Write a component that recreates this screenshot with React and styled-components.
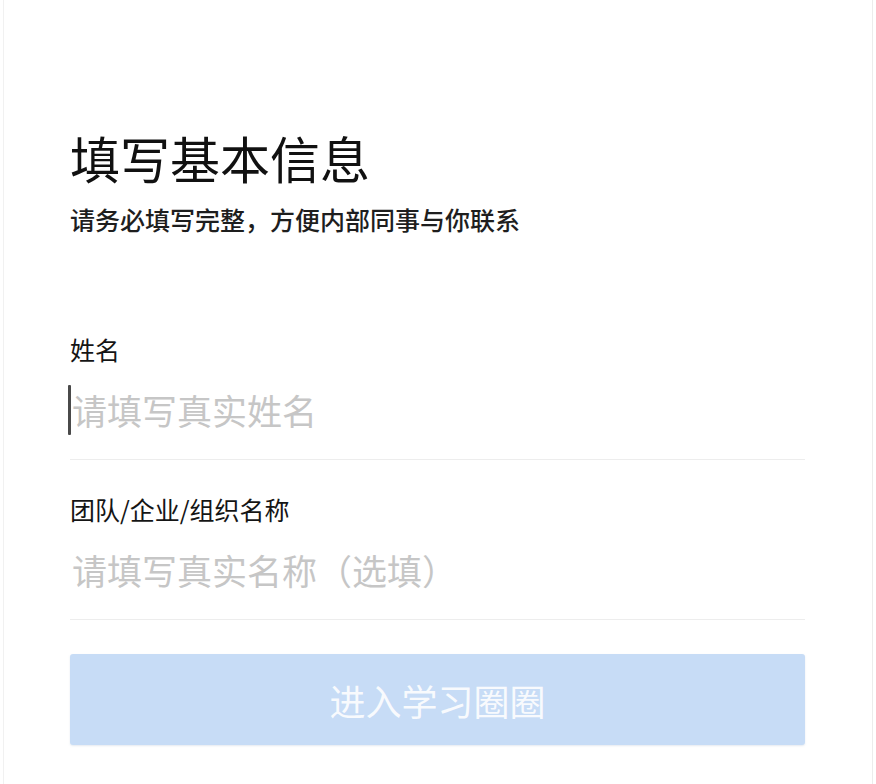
import React from "react";
import styled, { createGlobalStyle } from "styled-components";

const Global = createGlobalStyle`
  html, body { margin: 0; padding: 0; background: #ffffff; }
  body { font-family: "Noto Sans CJK SC", "Noto Sans", sans-serif; }
  * { box-sizing: border-box; }
`;

const Frame = styled.div`
  margin: 0 3px;
  height: 784px;
  border-left: 1px solid #f1f1f1;
  border-right: 1px solid #ececec;
  background: #ffffff;
  overflow: hidden;
`;

const Content = styled.div`
  padding: 127px 67px 0 66px;
  display: flex;
  flex-direction: column;
`;

const Title = styled.h1`
  margin: 0;
  font-size: 50px;
  line-height: 60px;
  font-weight: 400;
  color: #111111;
`;

const Subtitle = styled.p`
  margin: 17px 0 0;
  font-size: 25px;
  line-height: 30px;
  font-weight: 500;
  color: #1e1e1e;
`;

const Form = styled.form`
  margin-top: 100px;
  display: flex;
  flex-direction: column;
  gap: 34px;
`;

const Field = styled.label`
  display: flex;
  flex-direction: column;
  gap: 16px;
  padding-bottom: 19px;
  border-bottom: 1px solid #ededed;
`;

const Label = styled.span`
  font-size: 25px;
  line-height: 30px;
  color: #151515;
`;

const InputRow = styled.div`
  display: flex;
  align-items: center;
  height: 60px;
`;

const Caret = styled.span`
  width: 3px;
  height: 50px;
  margin-left: -2px;
  background: #4a4a4a;
  border-radius: 1px;
  flex: none;
`;

const Input = styled.input`
  flex: 1;
  min-width: 0;
  border: none;
  outline: none;
  background: transparent;
  font-family: inherit;
  font-size: 35px;
  line-height: 60px;
  height: 60px;
  padding: 0 0 0 ${(p) => (p.$caret ? 1 : 2)}px;
  color: #222;
  &::placeholder { color: #c6c6c6; }
`;

const Button = styled.button`
  height: 91px;
  border: none;
  border-radius: 3px;
  background: #c7dcf6;
  color: rgba(255, 255, 255, 0.88);
  font-family: inherit;
  font-size: 36px;
  letter-spacing: 0;
  cursor: pointer;
  box-shadow: 0 1px 2px rgba(150, 170, 200, 0.25);
`;

export default function App() {
  return (
    <>
      <Global />
      <Frame>
        <Content>
          <Title>填写基本信息</Title>
          <Subtitle>请务必填写完整，方便内部同事与你联系</Subtitle>
          <Form onSubmit={(e) => e.preventDefault()}>
            <Field>
              <Label>姓名</Label>
              <InputRow>
                <Caret />
                <Input $caret placeholder="请填写真实姓名" />
              </InputRow>
            </Field>
            <Field>
              <Label>团队/企业/组织名称</Label>
              <InputRow>
                <Input placeholder="请填写真实名称（选填）" />
              </InputRow>
            </Field>
            <Button type="submit">进入学习圈圈</Button>
          </Form>
        </Content>
      </Frame>
    </>
  );
}
